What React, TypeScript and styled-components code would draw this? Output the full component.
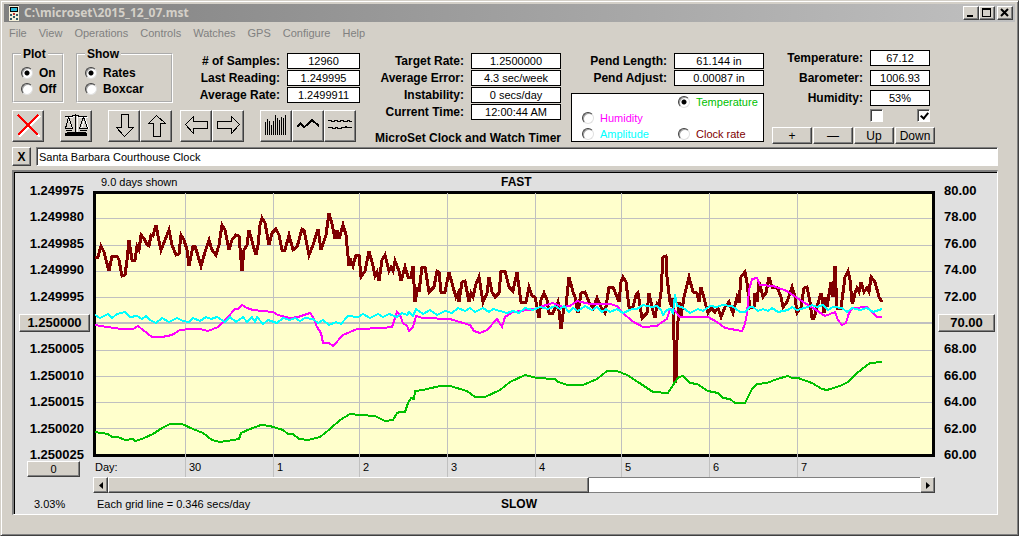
import React from "react";
import styled, { createGlobalStyle, css } from "styled-components";

const face = "#d4d0c8";

const Global = createGlobalStyle`
  * { box-sizing: border-box; }
  body {
    margin: 0;
    background: ${face};
    color: #000;
    font: 11px/12px "Liberation Sans", Arial, sans-serif;
  }
  button, input, output { font: inherit; color: inherit; }
`;

const raised = css`
  background: ${face};
  border: 1px solid;
  border-color: #fff #404040 #404040 #fff;
  box-shadow: inset -1px -1px 0 #808080;
`;

const Frame = styled.div`
  min-height: 100vh;
  padding: 2px 3px 18px;
  border: 1px solid;
  border-color: ${face} #404040 #404040 ${face};
  box-shadow: inset 1px 1px 0 #fff, inset -1px -1px 0 #808080;
`;

const TitleBar = styled.header`
  display: flex;
  align-items: center;
  height: 18px;
  margin-top: 1px;
  padding: 0 2px 0 5px;
  background: linear-gradient(90deg, #808080, #c0c0c0);
`;

const Title = styled.h1`
  flex: 1;
  margin: 0 0 0 5px;
  color: ${face};
  font: bold 12px/18px "Noto Sans", sans-serif;
`;

const WindowButton = styled.button<{ $apart?: boolean }>`
  ${raised}
  display: flex;
  width: 16px;
  height: 14px;
  padding: 0;
  margin-left: ${(p) => (p.$apart ? 2 : 0)}px;
`;

const MenuBar = styled.nav`
  display: flex;
  gap: 12px;
  height: 21px;
  padding-left: 5px;
`;

const MenuItem = styled.button`
  padding: 0;
  border: 0;
  background: none;
  color: #808080;
  font: 11px/20px "Liberation Sans", Arial, sans-serif;
`;

const Main = styled.main`
  padding: 5px 17px 0 8px;
`;

const Header = styled.div`
  display: grid;
  grid-template-columns: 348px 193px 195px 163px;
  column-gap: 8px;
`;

const Column = styled.div<{ $top?: number }>`
  display: flex;
  flex-direction: column;
  gap: 7px;
  padding-top: ${(p) => p.$top ?? 0}px;
`;

const OptionsRow = styled.div`
  display: flex;
  gap: 12px;
  height: 55px;
`;

const StatColumn = styled.div`
  flex: 1;
  padding-top: 5px;
`;

const Group = styled.fieldset<{ $width: number }>`
  width: ${(p) => p.$width}px;
  margin: 0;
  padding: 5px 0 0 7px;
  border: 2px groove #fff;
  font: bold 12px/12px "Liberation Sans", Arial, sans-serif;
`;

const Legend = styled.legend`
  padding: 0 2px;
`;

const Choice = styled.label<{ $color?: string }>`
  display: flex;
  align-items: center;
  gap: 6px;
  height: 16px;
  color: ${(p) => p.$color ?? "#000"};
  white-space: nowrap;
`;

const RadioInput = styled.input`
  appearance: none;
  width: 12px;
  height: 12px;
  margin: 0;
  border: 1px solid;
  border-color: #404040 #e0e0e0 #e0e0e0 #404040;
  border-radius: 50%;
  background: #fff;
  box-shadow: inset 1px 1px 0 #a0a0a0;
  &:checked {
    background: radial-gradient(circle, #000 0 2px, #fff 3px);
  }
`;

const StatList = styled.div<{ $gap?: number; $box: number; $inset?: number }>`
  display: grid;
  flex: 1 0 auto;
  align-content: start;
  grid-template-columns: 1fr ${(p) => p.$box}px;
  gap: ${(p) => p.$gap ?? 1}px 7px;
  padding-right: ${(p) => p.$inset ?? 0}px;
`;

const StatLabel = styled.label`
  text-align: right;
  white-space: nowrap;
  font-size: 12px;
  font-weight: bold;
  line-height: 16px;
`;

const StatValue = styled.output`
  height: 16px;
  border: 1px solid #000;
  background: #fff;
  text-align: center;
  line-height: 14px;
`;

const Toolbar = styled.div`
  display: flex;
  gap: 16px;
`;

const ToolGroup = styled.div`
  display: flex;
`;

const ArrowTools = styled.div`
  display: flex;
  gap: 8px;
`;

const ToolButton = styled.button`
  ${raised}
  width: 32px;
  height: 32px;
  padding: 0;
  svg {
    display: block;
    margin: -1px;
  }
`;

const Caption = styled.strong`
  text-align: right;
  white-space: nowrap;
  font-size: 12px;
`;

const SeriesPanel = styled.div`
  display: grid;
  grid-template-columns: 96px 1fr;
  align-content: start;
  height: 49px;
  margin: 0 0 2px 2px;
  padding-left: 10px;
  border: 1px solid #000;
  background: #fff;
`;

const CheckRow = styled.div`
  display: flex;
  justify-content: space-between;
  align-self: flex-end;
  width: 60px;
  margin: -4px 5px -2px 0;
`;

const CheckInput = styled.input`
  appearance: none;
  display: block;
  width: 13px;
  height: 13px;
  margin: 0;
  border: 1px solid;
  border-color: #808080 #fff #fff #808080;
  background: #fff;
  box-shadow: inset 1px 1px 0 #404040;
  &:checked::after {
    content: "";
    display: block;
    width: 3px;
    height: 6px;
    margin: 1px 0 0 4px;
    border: solid #000;
    border-width: 0 2px 2px 0;
    transform: rotate(40deg);
  }
`;

const ButtonRow = styled.div`
  display: grid;
  grid-template-columns: repeat(4, 1fr);
  gap: 1px;
`;

const PushButton = styled.button`
  ${raised}
  height: 17px;
  padding: 0;
  font-size: 12px;
  line-height: 14px;
`;

const NameRow = styled.div`
  display: flex;
  gap: 5px;
  margin-top: 3px;
`;

const ClearButton = styled.button`
  ${raised}
  width: 19px;
  height: 19px;
  padding: 0;
  font-size: 12px;
  font-weight: bold;
`;

const NameInput = styled.input`
  flex: 1;
  min-width: 0;
  height: 19px;
  padding: 0 2px;
  border: 1px solid;
  border-color: #808080 #fff #fff #808080;
  outline: 0;
  box-shadow: inset 1px 1px 0 #404040;
`;

const ChartFrame = styled.section`
  display: grid;
  grid-template-columns: 79px 1fr 62px;
  grid-template-rows: 19px 266px 20px 16px 21px;
  margin-top: 4px;
  border: solid;
  border-width: 2px 1px 1px 2px;
  border-color: #808080 #fff #fff #808080;
  background: #e0e0e0;
  box-shadow: inset 1px 1px 0 #000;
`;

const Banner = styled.div<{ $indent: number }>`
  display: grid;
  grid-column: 2;
  grid-template-columns: 408fr 434fr;
  align-items: center;
  span { padding-left: ${(p) => p.$indent}px; }
  strong { font-size: 12px; }
`;

const AxisRow = styled.div`
  display: grid;
  grid-column: 1 / -1;
  grid-template-columns: subgrid;
`;

const Axis = styled.ul<{ $side: "left" | "right" }>`
  display: flex;
  flex-direction: column;
  justify-content: space-between;
  height: 282px;
  margin: -9px 0 0;
  padding: ${(p) => (p.$side === "left" ? "0 3px 0 5px" : "0 2px 0 3px")};
  list-style: none;
  font-size: 13px;
  font-weight: bold;
  line-height: 18px;
  text-align: ${(p) => (p.$side === "left" ? "right" : "left")};
`;

const Tick = styled.li`
  height: 18px;
  padding: 0 6px;
`;

const OriginTick = styled.li`
  display: flex;
  height: 18px;
`;

const AxisButton = styled.button`
  ${raised}
  flex: 1;
  padding: 0;
  font-weight: bold;
  line-height: 14px;
`;

const Plot = styled.svg`
  display: block;
  width: 100%;
  height: 266px;
  path, rect, polyline { vector-effect: non-scaling-stroke; }
`;

const OffsetButton = styled.button`
  ${raised}
  grid-column: 1;
  width: 53px;
  height: 16px;
  margin: 4px 0 0 13px;
  padding: 0;
`;

const Days = styled.div`
  display: grid;
  grid-template-columns: 92fr 88fr 86fr 88fr 88fr 86fr 88fr 88fr 138fr;
  height: 18px;
`;

const Day = styled.span<{ $first?: boolean }>`
  padding-left: ${(p) => (p.$first ? 2 : 3)}px;
  border-left: ${(p) => (p.$first ? "0" : "1px solid #c0c0c0")};
  line-height: 20px;
`;

const ScrollBar = styled.div`
  display: flex;
  grid-column: 2;
`;

const ArrowButton = styled.button`
  ${raised}
  width: 15px;
  padding: 0;
  svg { display: block; margin: auto; }
`;

const Thumb = styled.div`
  ${raised}
  flex: 480;
`;

const Track = styled.div`
  flex: 332;
  border: solid #808080;
  border-width: 1px 0;
  background: #fff;
`;

const Percent = styled.span`
  grid-column: 1;
  padding-left: 20px;
  line-height: 22px;
`;

const rateLine =
  "95,257 98,257 101,246 104,252 106,260 109,271 112,256 117,256 119,260 122,276 125,275 127,260 129,240 132,260 135,260 137,246 139,250 141,235 145,240 147,245 149,246 151,235 153,236 156,225 158,236 161,250 165,240 169,230 172,245 176,255 179,254 181,235 184,240 187,250 189,266 193,246 195,246 201,266 205,252 209,240 212,250 216,255 219,245 222,225 225,230 229,250 232,240 236,235 239,236 242,271 244,250 247,245 249,230 253,245 256,255 258,245 260,225 262,218 265,223 269,245 272,233 276,229 279,235 282,250 285,250 289,235 293,250 297,247 302,229 304,230 309,255 313,245 318,229 321,250 326,235 329,213 332,224 335,239 337,230 339,239 343,225 346,235 349,266 351,261 353,266 356,255 359,255 361,277 365,271 369,251 373,266 375,276 377,272 379,281 382,260 385,255 389,271 391,267 393,271 395,261 399,271 401,281 405,267 408,277 411,277 413,266 415,302 418,287 419,292 422,267 425,267 429,292 434,287 437,271 439,272 441,292 445,292 449,272 453,287 456,297 458,293 459,302 462,282 465,281 469,302 471,293 473,297 476,284 479,277 483,302 487,293 489,277 492,292 495,297 499,293 501,271 505,271 509,287 513,291 517,272 521,302 526,302 529,287 532,296 535,297 537,307 539,318 541,300 544,293 547,300 549,313 553,313 558,302 561,329 564,307 566,306 569,277 573,292 575,297 578,313 581,293 585,292 589,302 593,308 597,298 601,307 605,313 609,287 613,287 617,297 619,302 621,282 623,277 626,282 629,307 633,307 636,295 638,293 642,318 647,313 649,293 652,307 655,318 657,304 659,307 661,292 663,257 666,256 667,277 670,302 672,307 673,298 675,381 676,381 677,340 679,302 681,317 684,297 689,277 693,292 697,293 699,302 701,287 705,302 708,313 711,308 715,312 718,308 721,317 725,307 729,302 733,313 737,297 739,303 741,277 745,272 747,283 750,308 754,307 755,293 757,302 759,282 763,297 766,293 769,277 772,287 777,287 781,297 783,307 787,302 792,287 795,297 797,313 801,307 804,288 807,287 810,302 812,318 814,318 817,307 821,293 824,313 825,297 827,307 831,282 833,297 835,266 837,308 841,308 845,277 848,271 850,280 852,302 853,302 855,293 857,288 859,292 861,282 864,292 867,288 869,292 871,277 875,282 879,297 882,302";

const humidityLine =
  "95,325 107,327 122,329 133,329 138,326 143,330 152,337 162,337 172,335 180,330 190,329 200,329 208,331 218,327 227,318 235,309 238,309 242,305 247,308 253,310 263,311 273,312 278,315 290,318 298,317 310,313 313,317 317,327 321,333 323,343 329,343 333,346 343,335 357,329 383,328 392,327 395,318 397,312 400,315 403,323 407,326 409,331 413,327 416,316 423,318 450,319 463,323 470,325 474,331 480,333 487,330 497,319 499,322 502,327 505,317 513,312 535,309 543,306 553,303 563,307 570,306 577,301 590,304 610,304 617,306 623,313 632,321 643,327 657,326 662,322 667,319 670,309 674,310 680,317 693,317 700,317 708,317 717,322 725,328 742,331 745,324 747,313 749,290 752,279 757,278 760,285 773,286 787,291 800,300 813,308 825,316 835,312 838,320 842,325 846,323 849,313 853,308 867,307 872,312 877,317 882,317";

const amplitudeLine =
  "95,315 100,318 108,314 112,318 117,314 125,312 130,317 137,316 142,319 146,316 150,320 156,323 162,318 169,322 177,318 183,321 189,322 193,318 200,321 206,317 211,319 217,317 225,322 230,317 236,322 243,317 247,322 252,317 255,322 257,317 263,324 268,320 277,323 283,318 290,320 295,318 300,321 305,318 313,319 318,323 323,320 329,325 336,322 341,324 348,316 358,317 363,314 370,318 378,314 383,317 389,314 397,317 402,313 407,315 409,312 413,316 416,309 423,314 430,310 437,315 445,311 452,313 458,308 465,311 470,308 475,312 483,308 489,312 493,309 507,313 513,311 519,313 525,308 533,310 540,307 548,309 555,306 560,309 564,306 569,312 573,308 578,311 585,306 592,310 597,307 602,312 606,309 610,312 617,309 623,313 632,309 637,309 643,305 652,307 657,306 661,310 663,315 667,310 670,309 673,313 675,294 677,306 682,307 690,313 698,309 703,311 710,306 717,307 722,305 732,306 740,312 745,312 750,307 753,307 758,311 763,309 768,311 772,308 778,312 788,310 792,307 797,310 808,307 812,305 817,307 823,305 828,310 833,307 842,308 847,312 852,308 860,310 867,308 873,312 882,309";

const temperatureLine =
  "95,432 108,434 112,437 118,437 125,440 133,439 135,441 142,439 153,434 162,428 170,424 182,424 193,429 203,433 212,440 220,442 233,440 239,439 241,433 250,429 261,425 270,426 283,430 288,434 293,434 299,439 308,440 320,437 330,429 340,420 350,414 360,415 375,416 385,421 393,420 397,413 400,412 405,412 408,403 411,398 414,399 415,391 423,390 440,386 450,386 467,391 475,397 485,397 500,390 510,382 525,375 537,378 555,379 558,382 568,385 583,385 597,379 607,371 617,371 627,375 638,382 653,392 668,393 675,382 679,377 683,376 690,383 697,384 708,391 718,393 723,398 730,399 735,403 745,403 752,389 757,384 767,383 777,379 788,376 792,378 798,378 812,383 822,389 827,390 840,386 848,382 857,373 870,363 882,362";

const gridRows = [218, 245, 271, 297, 350, 376, 402, 428];
const gridDays = [185, 273, 359, 447, 535, 621, 709, 797];
const rates = ["1.249975", "1.249980", "1.249985", "1.249990", "1.249995", "1.250000", "1.250005", "1.250010", "1.250015", "1.250020", "1.250025"];
const temps = ["80.00", "78.00", "76.00", "74.00", "72.00", "70.00", "68.00", "66.00", "64.00", "62.00", "60.00"];
const barTops = [12, 9, 11, 15, 11, 5, 8, 10, 7, 8, 5];

const outlined = { fill: "none", stroke: "#000", strokeWidth: 1 };

const icons: Record<string, React.ReactNode> = {
  Delete: (
    <>
      <path d="M7 6L28 27M7 27L28 6" stroke="#fff" strokeWidth="2" />
      <path d="M6 5L26 25M6 25L26 5" stroke="#f00" strokeWidth="2" />
    </>
  ),
  Balance: (
    <>
      <path d="M6 7.5H12L16 5.5L20 7.5H28M17.500 5V22M8.500 8L5.500 19M8.500 8L12.500 19M25 8L21.500 19M25 8L28.500 19" stroke="#fff" fill="none" />
      <path d="M15.500 4V22M5 6.500H11L15.500 5L20 6.500H27M8.500 7L5.500 18.500M8.500 7L12.500 18.500M23.500 7L19.500 18.500M23.500 7L27.500 18.500M5 18.500H13M6 20H12M19 18.500H28M20 20H27" stroke="#000" fill="none" />
      <path d="M7 22H26V23H27V26H5V23H7Z" />
    </>
  ),
  Down: <path {...outlined} d="M13.500 4.500H20.500V17.500H25.500L16.500 26.500L8.500 17.500H13.500Z" />,
  Up: <path {...outlined} d="M13.500 26.500V13.500H8.500L16.500 5.500L25.500 13.500H20.500V26.500Z" />,
  Left: <path {...outlined} d="M5.500 14.500L13.500 6.500V11.500H27.500V18.500H13.500V23.500Z" />,
  Right: <path {...outlined} d="M27.500 14.500L19.500 6.500V11.500H5.500V18.500H19.500V23.500Z" />,
  Bars: <path {...outlined} d={barTops.map((t, i) => `M${5.5 + i * 2} ${t}V25`).join("")} />,
  Line: <path d="M5 17L8.500 13.500L12 17.500L20 10L27 16" fill="none" stroke="#000" strokeWidth="2" />,
  Waves: (
    <path
      {...outlined}
      d="M4 10.500H7L8 11.500H10L11 10.500H13L14 11.500H16L17 10.500H19L20 11.500H23L24 10.500H25L26 11.500H28M4 17.500H8L9 18.500H11L12 17.500H13L14 18.500H17L18 17.500H21L22 16.500L23 17.500H28"
    />
  ),
};

type StatsProps = { items: [string, string][]; box: number; gap?: number; inset?: number };

function Stats({ items, box, gap, inset }: StatsProps) {
  return (
    <StatList $box={box} $gap={gap} $inset={inset}>
      {items.map(([label, value]) => {
        const id = label.replace(/\W/g, "");
        return (
          <React.Fragment key={label}>
            <StatLabel htmlFor={id}>{label}</StatLabel>
            <StatValue id={id}>{value}</StatValue>
          </React.Fragment>
        );
      })}
    </StatList>
  );
}

type RadioProps = { name: string; text: string; checked?: boolean; color?: string };

function Radio({ name, text, checked, color }: RadioProps) {
  return (
    <Choice $color={color}>
      <RadioInput type="radio" name={name} defaultChecked={checked} />
      {text}
    </Choice>
  );
}

function Tools({ names }: { names: string[] }) {
  return (
    <ToolGroup>
      {names.map((name) => (
        <ToolButton key={name} aria-label={name}>
          <svg width="32" height="32" shapeRendering="crispEdges">{icons[name]}</svg>
        </ToolButton>
      ))}
    </ToolGroup>
  );
}

function AxisLabels({ side, values }: { side: "left" | "right"; values: string[] }) {
  return (
    <Axis $side={side}>
      {values.map((v, i) =>
        i === 5 ? (
          <OriginTick key={v}>
            <AxisButton>{v}</AxisButton>
          </OriginTick>
        ) : (
          <Tick key={v}>{v}</Tick>
        )
      )}
    </Axis>
  );
}

export default function App() {
  return (
    <Frame>
      <Global />
      <TitleBar>
        <svg width="10" height="16" shapeRendering="crispEdges" aria-hidden="true">
          <rect width="10" height="16" fill="#f4efd8" />
          <path d="M0 0H10V1H0Z" fill="#404040" />
          <rect x="1" y="2" width="8" height="5" fill="#000" />
          <rect x="2" y="3" width="6" height="3" fill="#28b8d8" />
          <path d="M1 9H3V11H1ZM4 11H6V13H4ZM7 9H9V11H7ZM1 13H3V15H1ZM7 13H9V15H7Z" fill="#305868" />
          <path d="M4 8H6V10H4Z" fill="#c03030" />
        </svg>
        <Title>C:\microset\2015_12_07.mst</Title>
        <WindowButton aria-label="Minimize">
          <svg width="14" height="12"><path d="M3 8H9V10H3Z" /></svg>
        </WindowButton>
        <WindowButton aria-label="Maximize">
          <svg width="14" height="12"><path d="M2 1H11V10H2ZM3 3V9H10V3Z" fillRule="evenodd" /></svg>
        </WindowButton>
        <WindowButton aria-label="Close" $apart>
          <svg width="14" height="12"><path d="M3 2L10 9M3 9L10 2" stroke="#000" strokeWidth="2" /></svg>
        </WindowButton>
      </TitleBar>
      <MenuBar>
        {["File", "View", "Operations", "Controls", "Watches", "GPS", "Configure", "Help"].map((m) => (
          <MenuItem key={m}>{m}</MenuItem>
        ))}
      </MenuBar>
      <Main>
        <Header>
          <Column>
            <OptionsRow>
              <Group $width={52}>
                <Legend>Plot</Legend>
                <Radio name="plot" text="On" checked />
                <Radio name="plot" text="Off" />
              </Group>
              <Group $width={97}>
                <Legend>Show</Legend>
                <Radio name="show" text="Rates" checked />
                <Radio name="show" text="Boxcar" />
              </Group>
              <StatColumn>
                <Stats
                  box={73}
                  items={[
                    ["# of Samples:", "12960"],
                    ["Last Reading:", "1.249995"],
                    ["Average Rate:", "1.2499911"],
                  ]}
                />
              </StatColumn>
            </OptionsRow>
            <Toolbar>
              <Tools names={["Delete"]} />
              <Tools names={["Balance"]} />
              <ArrowTools>
                <Tools names={["Down", "Up"]} />
                <Tools names={["Left", "Right"]} />
              </ArrowTools>
              <Tools names={["Bars", "Line", "Waves"]} />
            </Toolbar>
          </Column>
          <Column $top={5}>
            <Stats
              box={90}
              items={[
                ["Target Rate:", "1.2500000"],
                ["Average Error:", "4.3 sec/week"],
                ["Instability:", "0 secs/day"],
                ["Current Time:", "12:00:44 AM"],
              ]}
            />
            <Caption>MicroSet Clock and Watch Timer</Caption>
          </Column>
          <Column $top={5}>
            <Stats
              box={90}
              items={[
                ["Pend Length:", "61.144 in"],
                ["Pend Adjust:", "0.00087 in"],
              ]}
            />
            <SeriesPanel>
              <span />
              <Radio name="series" text="Temperature" color="#00c000" checked />
              <Radio name="series" text="Humidity" color="#f0f" />
              <span />
              <Radio name="series" text="Amplitude" color="#0ff" />
              <Radio name="series" text="Clock rate" color="#800000" />
            </SeriesPanel>
          </Column>
          <Column $top={2}>
            <Stats
              box={60}
              gap={4}
              inset={5}
              items={[
                ["Temperature:", "67.12"],
                ["Barometer:", "1006.93"],
                ["Humidity:", "53%"],
              ]}
            />
            <CheckRow>
              <CheckInput type="checkbox" aria-label="Left marker" />
              <CheckInput type="checkbox" aria-label="Right marker" defaultChecked />
            </CheckRow>
            <ButtonRow>
              <PushButton>+</PushButton>
              <PushButton>—</PushButton>
              <PushButton>Up</PushButton>
              <PushButton>Down</PushButton>
            </ButtonRow>
          </Column>
        </Header>
        <NameRow>
          <ClearButton aria-label="Clear name">X</ClearButton>
          <NameInput aria-label="Name" defaultValue="Santa Barbara Courthouse Clock" />
        </NameRow>
        <ChartFrame>
          <Banner $indent={8}>
            <span>9.0 days shown</span>
            <strong>FAST</strong>
          </Banner>
          <AxisRow>
            <AxisLabels side="left" values={rates} />
            <Plot viewBox="93 191 842 266" preserveAspectRatio="none" shapeRendering="crispEdges" role="img" aria-label="Clock rate history">
              <rect x="93" y="191" width="842" height="266" fill="#ffffcc" />
              {gridRows.map((y) => (
                <path key={y} d={`M95 ${y + 0.5}H933`} stroke="#c0c0c0" />
              ))}
              <path d="M95 323H933" stroke="#c0c0c0" strokeWidth="2" />
              <rect x="94.500" y="192.500" width="839" height="263" fill="none" stroke="#000" strokeWidth="3" />
              {gridDays.map((x) => (
                <path key={x} d={`M${x + 0.5} 193V457`} stroke="#c0c0c0" />
              ))}
              <polyline points={rateLine} fill="none" stroke="#800000" strokeWidth="3" />
              <polyline points={humidityLine} fill="none" stroke="#f0f" strokeWidth="2" />
              <polyline points={amplitudeLine} fill="none" stroke="#0ff" strokeWidth="2" />
              <polyline points={temperatureLine} fill="none" stroke="#00c000" strokeWidth="2" />
            </Plot>
            <AxisLabels side="right" values={temps} />
          </AxisRow>
          <OffsetButton>0</OffsetButton>
          <Days>
            <Day $first>Day:</Day>
            {["30", "1", "2", "3", "4", "5", "6", "7"].map((d) => (
              <Day key={d}>{d}</Day>
            ))}
          </Days>
          <ScrollBar>
            <ArrowButton aria-label="Scroll left">
              <svg width="4" height="7"><path d="M4 0V7L0 3.500Z" /></svg>
            </ArrowButton>
            <Thumb />
            <Track />
            <ArrowButton aria-label="Scroll right">
              <svg width="4" height="7"><path d="M0 0V7L4 3.500Z" /></svg>
            </ArrowButton>
          </ScrollBar>
          <Percent>3.03%</Percent>
          <Banner $indent={4}>
            <span>Each grid line = 0.346 secs/day</span>
            <strong>SLOW</strong>
          </Banner>
        </ChartFrame>
      </Main>
    </Frame>
  );
}
